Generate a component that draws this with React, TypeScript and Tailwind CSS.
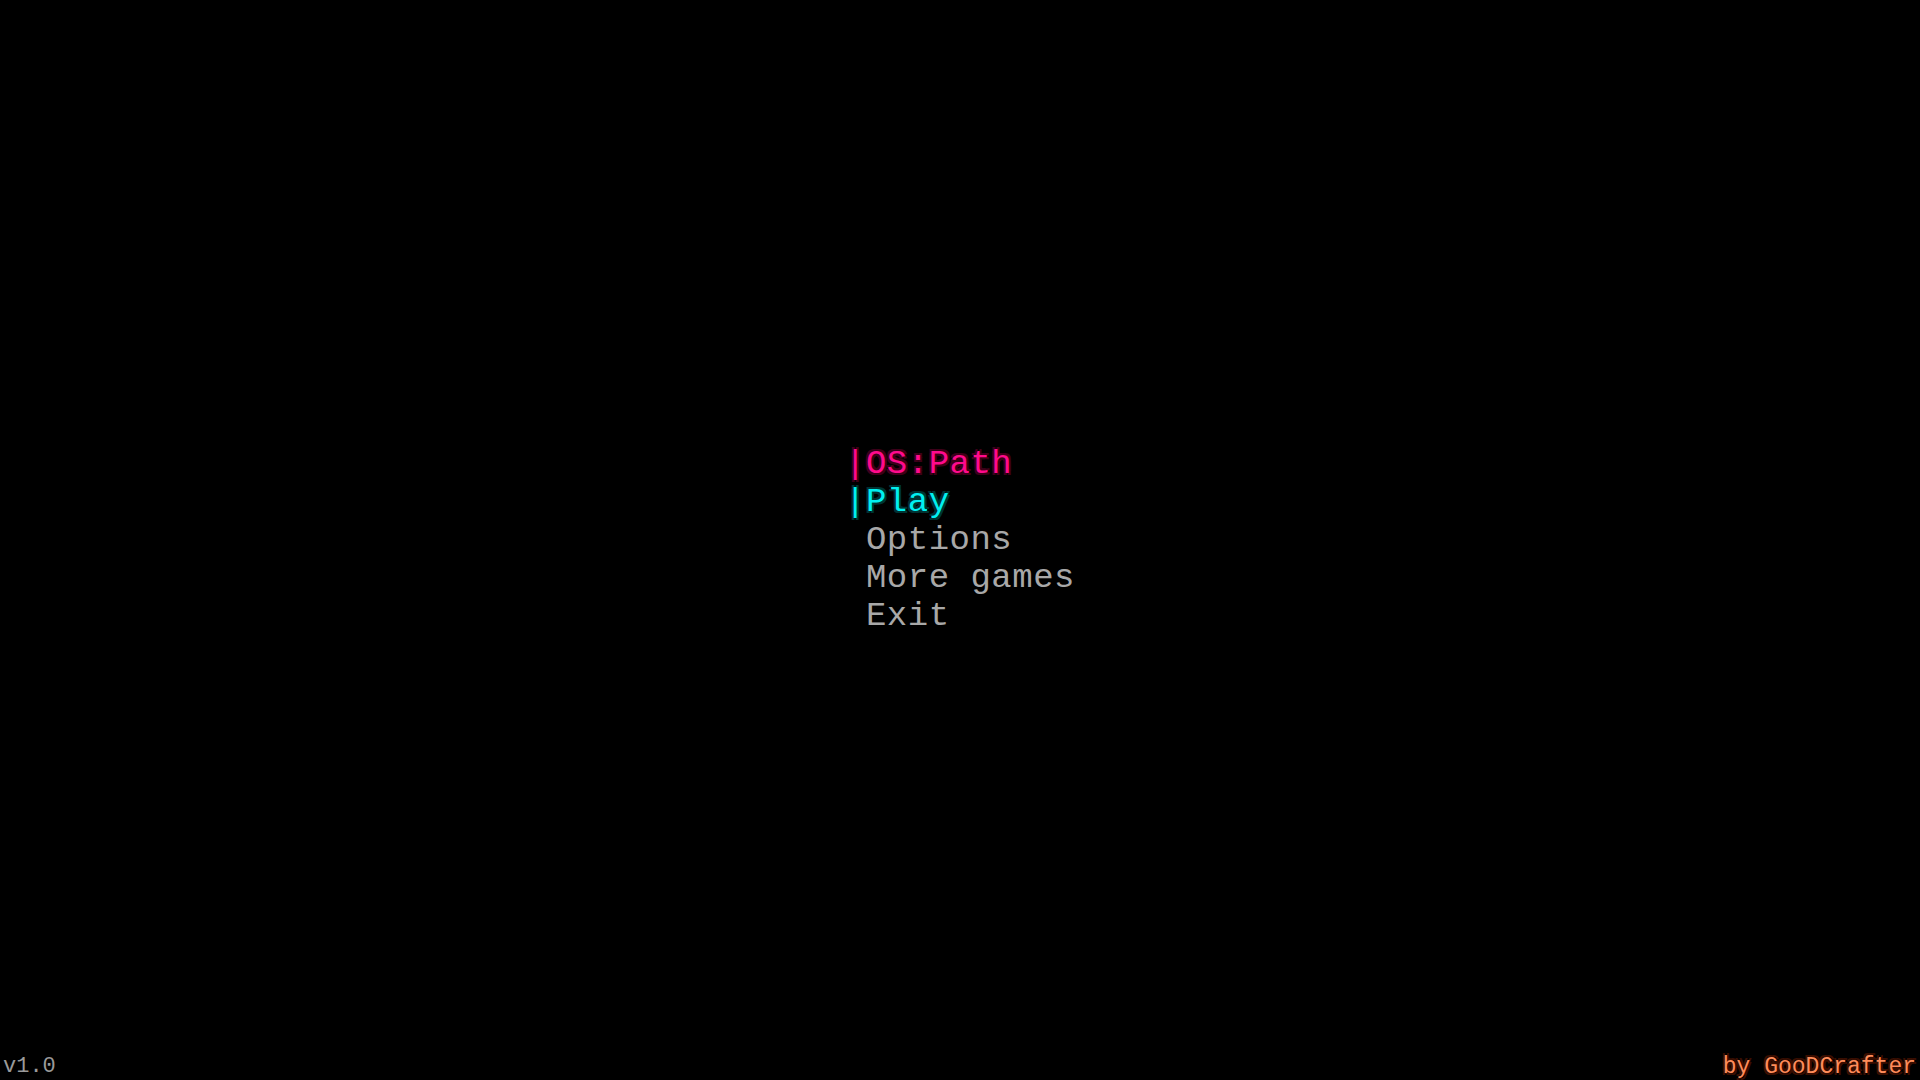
import React from "react";

const mono = "font-['Liberation_Mono','DejaVu_Sans_Mono',monospace]";

export default function App() {
  return (
    <div className={`relative h-[1080px] w-[1920px] overflow-hidden bg-black ${mono}`}>
      <div className="flex h-full w-full items-center justify-center">
        <div className="flex flex-col text-[34px] leading-[38px] tracking-[0.5px] whitespace-pre">
          <div className="text-[#ff0a8c] [text-shadow:2px_2px_0_#3d0019,-2px_-2px_0_#3d0019,2px_-2px_0_#3d0019,-2px_2px_0_#3d0019]">
            |OS:Path
          </div>
          <div className="text-[#00f0f0] [text-shadow:2px_2px_0_#003333,-2px_-2px_0_#003333,2px_-2px_0_#003333,-2px_2px_0_#003333]">
            |Play
          </div>
          <div className="text-[#a8a8a8]"> Options</div>
          <div className="text-[#a8a8a8]"> More games</div>
          <div className="text-[#a8a8a8]"> Exit</div>
        </div>
      </div>
      <div className="absolute bottom-[1px] left-[3px] text-[22px] leading-[24px] text-[#9a9a9a]">
        v1.0
      </div>
      <div className="absolute right-[4px] bottom-[1px] text-[23px] leading-[24px] text-[#ff8c5a] [text-shadow:2px_2px_0_#3a0e00,-2px_-2px_0_#3a0e00,2px_-2px_0_#3a0e00,-2px_2px_0_#3a0e00]">
        by GooDCrafter
      </div>
    </div>
  );
}
